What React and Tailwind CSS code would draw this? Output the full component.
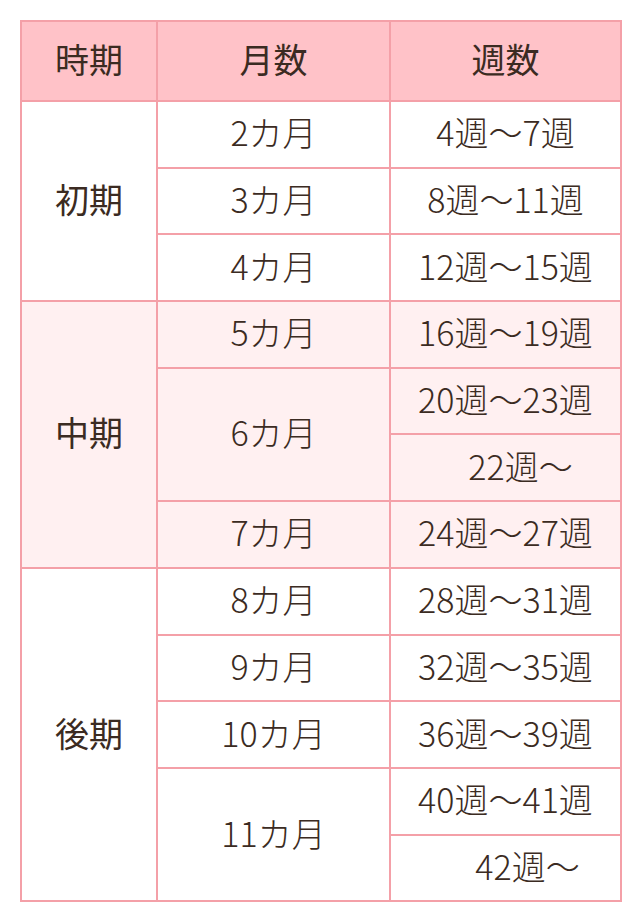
const rows = [
  { period: '初期', span: 3, bg: 'bg-white', items: [
    { month: '2カ月', weeks: ['4週〜7週'] },
    { month: '3カ月', weeks: ['8週〜11週'] },
    { month: '4カ月', weeks: ['12週〜15週'] },
  ] },
  { period: '中期', span: 4, bg: 'bg-[#fff0f1]', items: [
    { month: '5カ月', weeks: ['16週〜19週'] },
    { month: '6カ月', weeks: ['20週〜23週', '22週〜'], pad: 'pl-[30px]' },
    { month: '7カ月', weeks: ['24週〜27週'] },
  ] },
  { period: '後期', span: 5, bg: 'bg-white', items: [
    { month: '8カ月', weeks: ['28週〜31週'] },
    { month: '9カ月', weeks: ['32週〜35週'] },
    { month: '10カ月', weeks: ['36週〜39週'] },
    { month: '11カ月', weeks: ['40週〜41週', '42週〜'], pad: 'pl-[44px]' },
  ] },
]

const cell = 'border-2 border-[#f4a0a8] text-center align-middle pt-0 pb-[4px]'

export default function App() {
  const body = []
  rows.forEach((group, gi) => {
    let first = true
    group.items.forEach((item, ii) => {
      item.weeks.forEach((w, wi) => {
        body.push(
          <tr key={`${gi}-${ii}-${wi}`} className={`h-[66.7px] ${group.bg}`}>
            {first && (
              <td rowSpan={group.span} className={`${cell} font-normal`}>{group.period}</td>
            )}
            {wi === 0 && (
              <td rowSpan={item.weeks.length} className={cell}>{item.month}</td>
            )}
            <td className={`${cell} ${wi > 0 ? item.pad : ''}`}>{w}</td>
          </tr>
        )
        first = false
      })
    })
  })

  return (
    <div className="bg-white w-[640px] h-[922px] pt-[20px] pl-[20px]" style={{ fontFamily: '"Noto Sans CJK JP", "Noto Sans", sans-serif' }}>
      <table className="w-[600px] border-collapse text-[34px] text-[#3b2b22] leading-none table-fixed font-light">
        <colgroup>
          <col className="w-[136px]" />
          <col className="w-[233px]" />
          <col className="w-[231px]" />
        </colgroup>
        <thead>
          <tr className="h-[80px] bg-[#ffc2c8]">
            <th className={`${cell} font-normal`}>時期</th>
            <th className={`${cell} font-normal`}>月数</th>
            <th className={`${cell} font-normal`}>週数</th>
          </tr>
        </thead>
        <tbody>{body}</tbody>
      </table>
    </div>
  )
}
